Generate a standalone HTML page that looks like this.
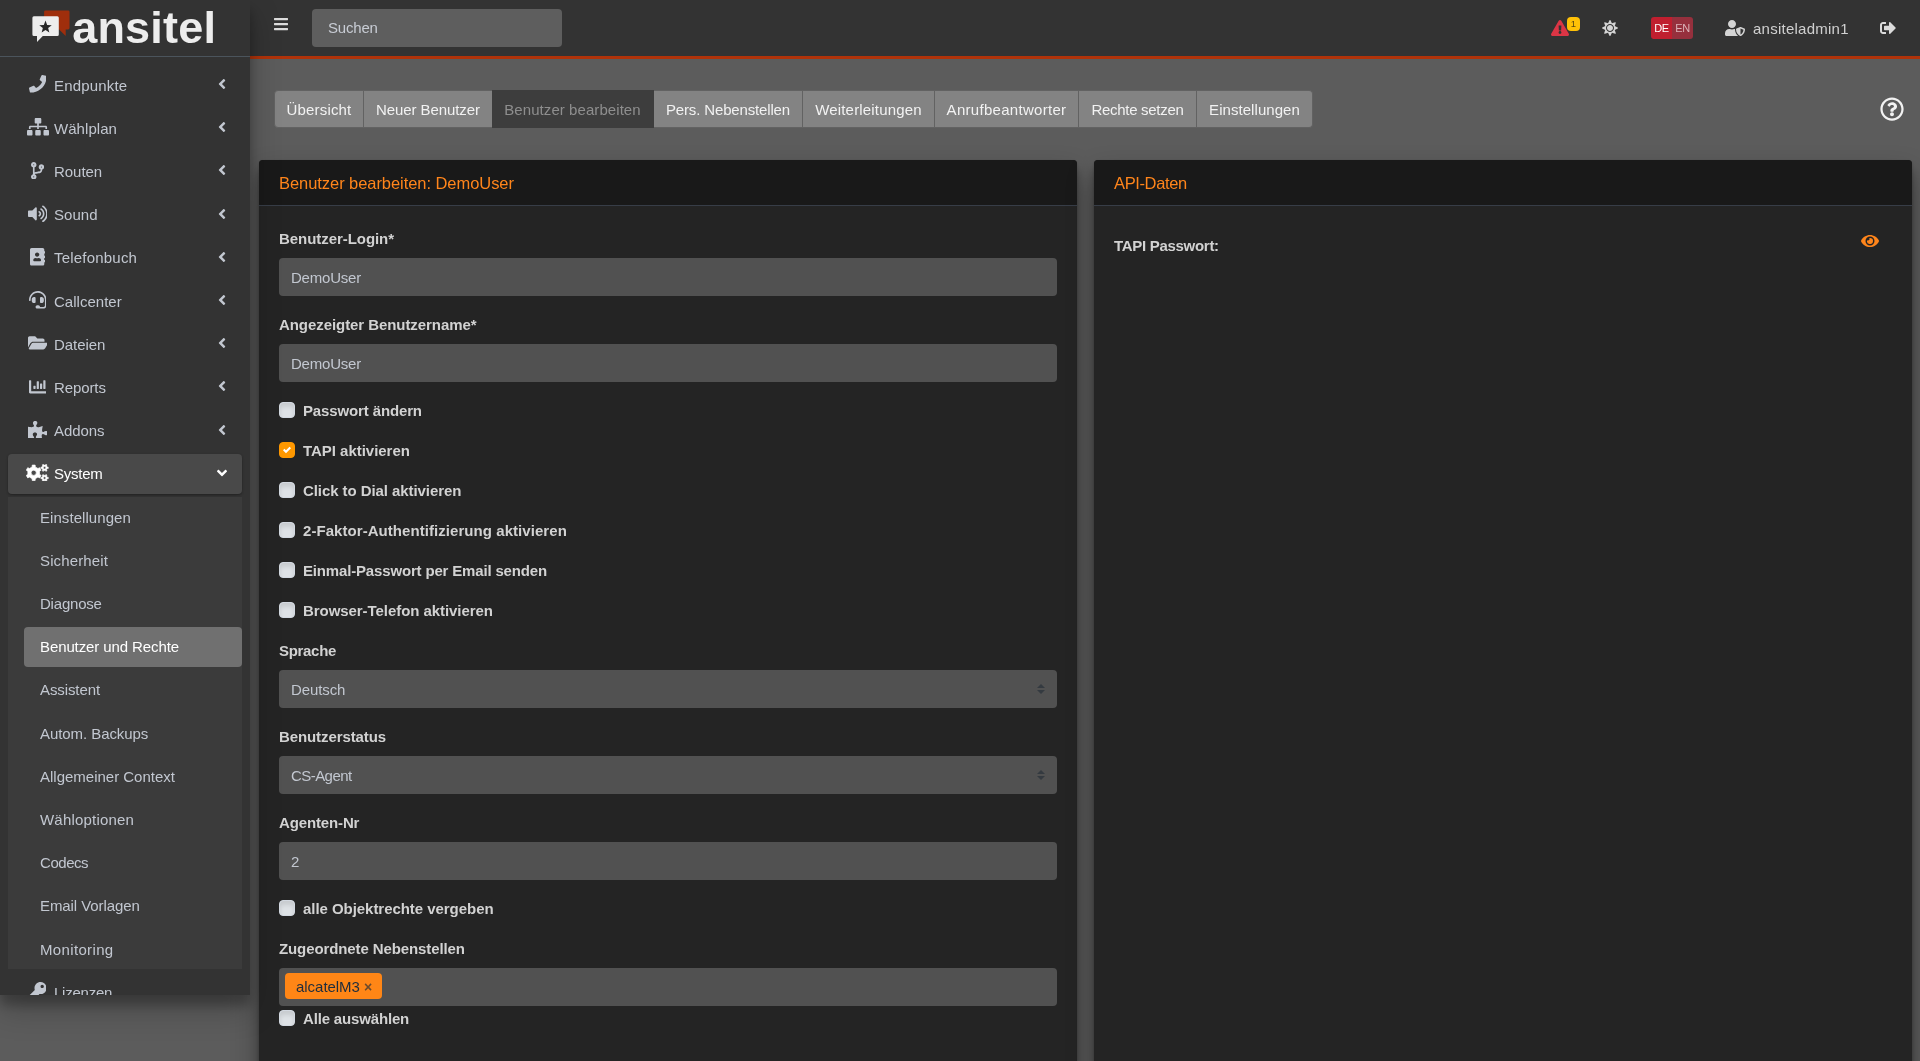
<!DOCTYPE html>
<html lang="de">
<head>
<meta charset="utf-8">
<title>ansitel - Benutzer bearbeiten</title>
<style>
*{box-sizing:border-box}
html,body{margin:0;padding:0}
body{width:1920px;height:1061px;overflow:hidden;position:relative;background:#5c5c5c;
  font-family:"Liberation Sans",sans-serif;font-size:15px;color:#d6d6d6}
ul{list-style:none;margin:0;padding:0}
svg{display:block}
#page{position:absolute;left:0;top:0;width:1920px;height:1061px;overflow:hidden;will-change:transform}

/* ---------- sidebar ---------- */
#sidebar{position:absolute;left:0;top:0;width:250px;height:995px;background:#333;overflow:hidden;z-index:30;
  box-shadow:0 14px 28px rgba(0,0,0,.25),0 10px 10px rgba(0,0,0,.22);color:#c2c7d0}
#brand{position:relative;height:57px;border-bottom:1px solid #4b545c}
#logo{position:absolute;left:31.600px;top:10px}
#brandtxt{position:absolute;left:72.200px;top:-1.200px;font-weight:bold;font-size:45px;line-height:57px;color:#ededed;letter-spacing:.200px;white-space:nowrap}
#nav{position:absolute;left:0;top:0;width:250px;height:995px}
.ni{position:absolute;left:8px;width:234px;height:40px;border-radius:4px;white-space:nowrap}
.nicon{position:absolute;left:16.800px;top:-1px;width:25.600px;height:40px;display:flex;align-items:center;justify-content:center}
.nt{position:absolute;left:46px;top:.5px;line-height:40px}
.narr{position:absolute;left:210px;top:11px;width:8px;height:16px}
.ni.open{background:#494949;color:#fff;box-shadow:0 1px 3px rgba(0,0,0,.12),0 1px 2px rgba(0,0,0,.24)}
.ni.open .narr{left:208.500px;top:11px}
.tree{position:absolute;left:8px;width:234px;height:472px;background:#3b3b3b}
.si{position:absolute;left:16px;width:218px;height:40px;border-radius:4px;white-space:nowrap}
.st{position:absolute;left:16px;top:.5px;line-height:40px}
.si.act{background:#707070;color:#fff}

/* ---------- topbar ---------- */
#topbar{position:absolute;left:250px;top:0;width:1670px;height:59px;background:#333;border-bottom:3px solid #b0330a;z-index:20;color:#d0d0d0}
#topbar>*{position:absolute}
#burger{left:24px;top:16px;color:#dcdcdc}
#search{left:62px;top:9px;width:250px;height:38px;border-radius:4px;background:#5e5e5e;padding:0 16px;line-height:38px;color:#c8ccd4;white-space:nowrap}
#warn{left:1301px;top:20px;color:#dc3545}
#badge{left:1317px;top:17px;width:13px;height:14px;border-radius:4px;background:#ffc107;color:#5c4a10;font-size:9.500px;line-height:14px;text-align:center}
#sun{left:1351.600px;top:20.400px;color:#d4d4d4}
#lang{left:1401px;top:17px;width:42px;height:22px;border-radius:3px;overflow:hidden;font-size:11px;line-height:23px;letter-spacing:-.3px}
#lang span{position:absolute;top:0;width:21px;height:22px;text-align:center}
#lang .de{left:0;background:#c01f2f;color:#fff}
#lang .en{left:21px;background:#96303d;color:#dcb4b9}
#ushield{left:1475px;top:20px;color:#d4d4d4}
.uname{left:1503px;top:0;line-height:57px;color:#d0d0d0;white-space:nowrap}
#signout{left:1629.600px;top:20px;color:#dcdcdc}

/* ---------- content ---------- */
#content{position:absolute;left:0;top:0;width:1920px;height:1061px;z-index:10}
#tabs{position:absolute;left:274px;top:90px;height:38px;width:1039px}
.tab{position:absolute;top:0;height:38px;background:#838383;border:1px solid #626262;border-left-width:0;color:#f2f2f2;text-align:center;line-height:36px;white-space:nowrap}
.tab.first{border-radius:4px 0 0 4px;border-left-width:1px}
.tab.last{border-radius:0 4px 4px 0}
.tab.act{background:#3d3d3d;border-color:#3d3d3d;color:#8e8e8e;z-index:2}
#help{position:absolute;left:1880.300px;top:97px;color:#f2f2f2}

.card{position:absolute;top:159.500px;width:818px;height:1000px;background:#242424;border-radius:4px;
  box-shadow:0 14px 28px rgba(0,0,0,.32),0 10px 10px rgba(0,0,0,.25),0 1px 3px rgba(0,0,0,.2)}
#card1{left:259px}
#card2{left:1094px}
.ch{height:46.120px;border-bottom:1px solid #373d47;background:#191919;border-radius:4px 4px 0 0;padding:12px 20px}
.ch h3{margin:0;font-weight:normal;font-size:16.500px;line-height:21.120px;color:#ff851b;white-space:nowrap}
.cbody{padding:20px;position:relative}
.fg{margin-bottom:16px}
.fg.last{margin-bottom:0}
label{display:block;font-weight:bold;line-height:24px;color:#d2d2d2;white-space:nowrap}
.fg label{margin-bottom:8px}
.inp{position:relative;height:38px;border-radius:4px;background:#515151;padding:0 12px;line-height:38px;color:#c2c7d0;white-space:nowrap}
.inp.sel svg{position:absolute;right:12px;top:14px;color:#343a40}
.ck{position:relative;height:24px;margin-bottom:16px;padding-left:24px}
.ck.tight{margin-bottom:0}
.cb{position:absolute;left:0;top:4px;width:16px;height:16px;border-radius:4px;background:#dee2e6;border:1px solid #d3d9e1;box-shadow:inset 0 4px 4px rgba(0,0,0,.1)}
.cb.on{background:#ff9800;border-color:#ff9800;box-shadow:none;color:#fff}
.cb.on svg{position:absolute;left:3px;top:3px}
.inp.s2{padding:0}
.chip{position:absolute;left:6px;top:5.500px;height:26px;width:97px;border-radius:4px;background:#ff8616;color:#1f2d3d;line-height:26px}
.chip .ct{position:absolute;left:11px;top:1px}
.chip .cx{position:absolute;left:79px;top:1px;color:#6b4a2c;font-weight:bold;font-size:14px}
#tapi{position:absolute;left:20px;top:26.900px}
#eye{position:absolute;left:766.500px;top:27.600px;color:#ff851b}

.tx{position:relative;top:1px}
#search .tx{top:0}

</style>
</head>
<body>
<div id="page">

<aside id="sidebar">
  <div id="brand">
    <svg id="logo" width="40" height="34" viewBox="0 0 40 34"><path fill="#9f2e0c" d="M13.5 0.4h22.6a1.4 1.4 0 0 1 1.4 1.4v16.3a1.4 1.4 0 0 1-1.400 1.400h-2.400v6.400l-6.600-6.400H13.500a1.400 1.400 0 0 1-1.400-1.400V1.800a1.400 1.400 0 0 1 1.400-1.400z"/><path fill="#ededed" d="M1.9 6.200h23.400a1.500 1.500 0 0 1 1.500 1.500v16.700a1.500 1.500 0 0 1-1.500 1.500H10.800l-5.800 6.200v-6.200H1.900a1.500 1.500 0 0 1-1.500-1.500V7.700a1.500 1.500 0 0 1 1.500-1.500z"/><path fill="#262626" d="M13.5 10.600l1.650 4.300 4.600.25-3.600 2.900 1.200 4.450-3.850-2.500-3.850 2.500 1.200-4.450-3.600-2.900 4.600-.25z"/></svg>
    <span id="brandtxt">ansitel</span>
  </div>
  <ul id="nav"><li class="ni " style="top:65.0px"><span class="nicon "><svg width="17.60" height="17.60" viewBox="0 0 512 512" style=""><path fill="currentColor" d="M493.4 24.600l-104-24c-11.300-2.600-22.900 3.300-27.500 13.900l-48 112c-4.200 9.800-1.400 21.300 6.900 28l60.600 49.600c-36 76.700-98.900 140.500-177.200 177.200l-49.600-60.600c-6.800-8.300-18.200-11.100-28-6.900l-112 48C3.900 366.500-2 378.100.6 389.400l24 104C27.100 504.200 36.700 512 48 512c256.100 0 464-207.500 464-464 0-11.200-7.700-20.900-18.600-23.400z"/></svg></span><span class="nt" style="font-size:15.0px;letter-spacing:0.172px;">Endpunkte</span><span class="narr"><svg width="8.00" height="16.00" viewBox="0 0 256 512" style=""><path fill="currentColor" d="M31.7 239l136-136c9.4-9.4 24.6-9.4 33.900 0l22.600 22.600c9.400 9.400 9.400 24.600 0 33.900L127.900 256l96.400 96.400c9.400 9.400 9.400 24.600 0 33.900L201.700 409c-9.400 9.400-24.600 9.400-33.900 0l-136-136c-9.500-9.400-9.500-24.600-.1-34z"/></svg></span></li><li class="ni " style="top:108.2px"><span class="nicon "><svg width="22.00" height="17.60" viewBox="0 0 640 512" style=""><path fill="currentColor" d="M128 352H32c-17.670 0-32 14.330-32 32v96c0 17.670 14.330 32 32 32h96c17.670 0 32-14.330 32-32v-96c0-17.670-14.330-32-32-32zm-24-80h192v48h48v-48h192v48h48v-57.590c0-21.170-17.230-38.410-38.410-38.410H344v-64h40c17.670 0 32-14.330 32-32V32c0-17.670-14.330-32-32-32H256c-17.670 0-32 14.330-32 32v96c0 17.670 14.330 32 32 32h40v64H94.410C73.230 224 56 241.230 56 262.410V320h48v-48zm264 80h-96c-17.670 0-32 14.330-32 32v96c0 17.670 14.330 32 32 32h96c17.670 0 32-14.330 32-32v-96c0-17.670-14.330-32-32-32zm240 0h-96c-17.670 0-32 14.330-32 32v96c0 17.670 14.330 32 32 32h96c17.670 0 32-14.330 32-32v-96c0-17.670-14.330-32-32-32z"/></svg></span><span class="nt" style="font-size:15.0px;letter-spacing:0.058px;">Wählplan</span><span class="narr"><svg width="8.00" height="16.00" viewBox="0 0 256 512" style=""><path fill="currentColor" d="M31.7 239l136-136c9.4-9.4 24.6-9.4 33.900 0l22.600 22.600c9.400 9.400 9.400 24.600 0 33.900L127.900 256l96.400 96.400c9.400 9.400 9.400 24.600 0 33.900L201.700 409c-9.400 9.400-24.600 9.400-33.900 0l-136-136c-9.500-9.400-9.500-24.600-.1-34z"/></svg></span></li><li class="ni " style="top:151.4px"><span class="nicon "><svg width="13.20" height="17.60" viewBox="0 0 384 512" style=""><path fill="currentColor" d="M384 144c0-44.200-35.800-80-80-80s-80 35.800-80 80c0 36.400 24.300 67.100 57.500 76.800-.6 16.100-4.200 28.500-11 36.900-15.400 19.200-49.300 22.400-85.200 25.700-28.200 2.600-57.400 5.400-81.300 16.900v-144c32.500-10.200 56-40.500 56-76.300 0-44.200-35.800-80-80-80S0 35.800 0 80c0 35.800 23.500 66.100 56 76.300v199.300C23.500 365.900 0 396.200 0 432c0 44.200 35.800 80 80 80s80-35.800 80-80c0-34-21.200-63.100-51.200-74.600 3.100-5.200 7.800-9.800 14.900-13.400 16.200-8.200 40.400-10.400 66.100-12.800 42.200-3.900 90-8.400 118.200-43.400 14-17.400 21.100-39.800 21.600-67.900 31.600-10.800 54.400-40.700 54.400-75.900zM80 64c8.800 0 16 7.200 16 16s-7.200 16-16 16-16-7.200-16-16 7.200-16 16-16zm0 384c-8.800 0-16-7.200-16-16s7.200-16 16-16 16 7.200 16 16-7.200 16-16 16zm224-320c8.800 0 16 7.200 16 16s-7.200 16-16 16-16-7.200-16-16 7.200-16 16-16z"/></svg></span><span class="nt" style="font-size:15.0px;letter-spacing:-0.034px;">Routen</span><span class="narr"><svg width="8.00" height="16.00" viewBox="0 0 256 512" style=""><path fill="currentColor" d="M31.7 239l136-136c9.4-9.4 24.6-9.4 33.900 0l22.600 22.600c9.400 9.400 9.400 24.600 0 33.900L127.900 256l96.400 96.400c9.400 9.400 9.400 24.600 0 33.900L201.700 409c-9.400 9.400-24.600 9.400-33.900 0l-136-136c-9.500-9.400-9.500-24.600-.1-34z"/></svg></span></li><li class="ni " style="top:194.6px"><span class="nicon "><svg width="19.80" height="17.60" viewBox="0 0 576 512" style=""><path fill="currentColor" d="M215.03 71.050L126.060 160H24c-13.260 0-24 10.740-24 24v144c0 13.250 10.740 24 24 24h102.060l88.970 88.950c15.030 15.030 40.970 4.470 40.970-16.970V88.020c0-21.460-25.960-31.980-40.970-16.970zm233.320-51.080c-11.170-7.330-26.180-4.240-33.510 6.950-7.340 11.170-4.220 26.180 6.950 33.510 66.270 43.490 105.820 116.600 105.820 195.580 0 78.980-39.550 152.090-105.820 195.580-11.170 7.320-14.290 22.340-6.950 33.500 7.040 10.710 21.930 14.560 33.510 6.950C528.270 439.580 576 351.330 576 256S528.270 72.430 448.350 19.970zM480 256c0-63.530-32.060-121.940-85.770-156.240-11.190-7.140-26.030-3.820-33.120 7.460s-3.780 26.210 7.410 33.360C408.270 165.970 432 209.110 432 256s-23.730 90.030-63.480 115.420c-11.190 7.140-14.500 22.070-7.410 33.360 6.510 10.360 21.120 15.140 33.120 7.460C447.940 377.940 480 319.540 480 256zm-141.770-76.870c-11.580-6.330-26.190-2.160-32.610 9.450-6.390 11.610-2.160 26.200 9.450 32.610C327.980 228.280 336 241.630 336 256c0 14.380-8.020 27.720-20.920 34.810-11.610 6.410-15.840 21-9.450 32.610 6.430 11.660 21.050 15.800 32.610 9.450 28.230-15.550 45.770-45 45.770-76.880s-17.540-61.320-45.780-76.860z"/></svg></span><span class="nt" style="font-size:15.0px;letter-spacing:0.047px;">Sound</span><span class="narr"><svg width="8.00" height="16.00" viewBox="0 0 256 512" style=""><path fill="currentColor" d="M31.7 239l136-136c9.4-9.4 24.6-9.4 33.900 0l22.600 22.600c9.400 9.400 9.400 24.600 0 33.900L127.900 256l96.400 96.400c9.400 9.400 9.400 24.600 0 33.900L201.700 409c-9.400 9.400-24.600 9.400-33.900 0l-136-136c-9.500-9.400-9.500-24.600-.1-34z"/></svg></span></li><li class="ni " style="top:237.8px"><span class="nicon "><svg width="15.40" height="17.60" viewBox="0 0 448 512" style=""><path fill="currentColor" d="M436 160c6.600 0 12-5.400 12-12v-40c0-6.600-5.400-12-12-12h-20V48c0-26.500-21.500-48-48-48H48C21.500 0 0 21.500 0 48v416c0 26.500 21.500 48 48 48h320c26.500 0 48-21.500 48-48v-48h20c6.600 0 12-5.400 12-12v-40c0-6.600-5.400-12-12-12h-20v-64h20c6.600 0 12-5.400 12-12v-40c0-6.600-5.400-12-12-12h-20v-64h20zm-228-32c35.300 0 64 28.700 64 64s-28.700 64-64 64-64-28.700-64-64 28.700-64 64-64zm112 236.800c0 10.600-10 19.200-22.400 19.200H118.400C106 384 96 375.400 96 364.800v-19.200c0-31.800 30.100-57.600 67.200-57.600h5c12.300 5.100 25.700 8 39.800 8s27.600-2.900 39.800-8h5c37.100 0 67.200 25.800 67.200 57.600v19.200z"/></svg></span><span class="nt" style="font-size:15.0px;letter-spacing:0.203px;">Telefonbuch</span><span class="narr"><svg width="8.00" height="16.00" viewBox="0 0 256 512" style=""><path fill="currentColor" d="M31.7 239l136-136c9.4-9.4 24.6-9.4 33.900 0l22.600 22.600c9.400 9.400 9.400 24.600 0 33.900L127.900 256l96.400 96.400c9.400 9.400 9.400 24.600 0 33.900L201.700 409c-9.400 9.400-24.600 9.400-33.900 0l-136-136c-9.500-9.400-9.500-24.600-.1-34z"/></svg></span></li><li class="ni " style="top:281.0px"><span class="nicon "><svg width="17.60" height="17.60" viewBox="0 0 512 512" style=""><path fill="currentColor" d="M192 208c0-17.670-14.330-32-32-32h-16c-35.350 0-64 28.650-64 64v48c0 35.350 28.650 64 64 64h16c17.670 0 32-14.330 32-32V208zm176 144c35.350 0 64-28.650 64-64v-48c0-35.350-28.650-64-64-64h-16c-17.670 0-32 14.330-32 32v112c0 17.670 14.330 32 32 32h16zM256 0C113.180 0 4.580 118.830 0 256v16c0 8.840 7.160 16 16 16h16c8.840 0 16-7.160 16-16v-16c0-114.690 93.310-208 208-208s208 93.310 208 208h-.12c.08 2.430.12 165.720.12 165.720 0 23.350-18.930 42.280-42.280 42.280H320c0-26.510-21.490-48-48-48h-32c-26.510 0-48 21.490-48 48s21.490 48 48 48h181.720c49.860 0 90.280-40.420 90.280-90.280V256C507.420 118.830 398.820 0 256 0z"/></svg></span><span class="nt" style="font-size:15.0px;letter-spacing:0.017px;">Callcenter</span><span class="narr"><svg width="8.00" height="16.00" viewBox="0 0 256 512" style=""><path fill="currentColor" d="M31.7 239l136-136c9.4-9.4 24.6-9.4 33.900 0l22.600 22.600c9.400 9.400 9.400 24.600 0 33.900L127.900 256l96.400 96.400c9.400 9.400 9.400 24.600 0 33.900L201.700 409c-9.400 9.400-24.600 9.400-33.900 0l-136-136c-9.500-9.400-9.500-24.600-.1-34z"/></svg></span></li><li class="ni " style="top:324.2px"><span class="nicon "><svg width="19.80" height="17.60" viewBox="0 0 576 512" style=""><path fill="currentColor" d="M572.694 292.093L500.270 416.248A63.997 63.997 0 0 1 444.989 448H45.025c-18.523 0-30.064-20.093-20.731-36.093l72.424-124.155A64 64 0 0 1 152 256h399.964c18.523 0 30.064 20.093 20.730 36.093zM152 224h328v-48c0-26.510-21.490-48-48-48H272l-64-64H48C21.490 64 0 85.490 0 112v278.046l69.077-118.418C86.214 242.250 117.989 224 152 224z"/></svg></span><span class="nt" style="font-size:15.0px;letter-spacing:-0.044px;">Dateien</span><span class="narr"><svg width="8.00" height="16.00" viewBox="0 0 256 512" style=""><path fill="currentColor" d="M31.7 239l136-136c9.4-9.4 24.6-9.4 33.900 0l22.600 22.600c9.400 9.400 9.400 24.600 0 33.900L127.900 256l96.400 96.400c9.400 9.400 9.400 24.600 0 33.900L201.700 409c-9.400 9.400-24.600 9.400-33.900 0l-136-136c-9.500-9.400-9.500-24.600-.1-34z"/></svg></span></li><li class="ni " style="top:367.4px"><span class="nicon "><svg width="17.60" height="17.60" viewBox="0 0 512 512" style=""><path fill="currentColor" d="M332.800 320h38.400c6.400 0 12.800-6.400 12.800-12.800V172.800c0-6.400-6.400-12.800-12.800-12.800h-38.400c-6.400 0-12.800 6.400-12.800 12.800v134.400c0 6.400 6.400 12.800 12.800 12.800zm96 0h38.400c6.400 0 12.800-6.400 12.800-12.800V76.800c0-6.400-6.400-12.800-12.800-12.800h-38.400c-6.400 0-12.800 6.400-12.800 12.800v230.400c0 6.400 6.400 12.800 12.800 12.800zm-288 0h38.400c6.400 0 12.800-6.400 12.800-12.800v-70.400c0-6.400-6.400-12.800-12.800-12.800h-38.400c-6.400 0-12.800 6.400-12.800 12.800v70.400c0 6.400 6.400 12.800 12.800 12.800zm96 0h38.400c6.400 0 12.800-6.400 12.800-12.800V108.800c0-6.400-6.400-12.800-12.800-12.800h-38.400c-6.400 0-12.800 6.400-12.800 12.800v198.400c0 6.400 6.400 12.800 12.800 12.800zM496 384H64V80c0-8.840-7.160-16-16-16H16C7.160 64 0 71.160 0 80v336c0 17.670 14.330 32 32 32h464c8.840 0 16-7.160 16-16v-32c0-8.840-7.160-16-16-16z"/></svg></span><span class="nt" style="font-size:15.0px;letter-spacing:-0.099px;">Reports</span><span class="narr"><svg width="8.00" height="16.00" viewBox="0 0 256 512" style=""><path fill="currentColor" d="M31.7 239l136-136c9.4-9.4 24.6-9.4 33.900 0l22.600 22.600c9.400 9.400 9.400 24.600 0 33.900L127.900 256l96.400 96.400c9.400 9.400 9.400 24.600 0 33.900L201.700 409c-9.400 9.400-24.600 9.400-33.900 0l-136-136c-9.500-9.400-9.500-24.600-.1-34z"/></svg></span></li><li class="ni " style="top:410.6px"><span class="nicon "><svg width="19.80" height="17.60" viewBox="0 0 576 512" style=""><path fill="currentColor" d="M519.442 288.651c-41.519 0-59.500 31.593-82.058 31.593C377.409 320.244 432 144 432 144s-196.288 80-196.288-3.297c0-35.827 36.288-46.250 36.288-85.985C272 19.216 243.885 0 210.539 0c-34.654 0-66.366 18.891-66.366 56.346 0 41.364 31.711 59.277 31.711 81.750C175.885 207.719 0 166.758 0 166.758v333.237s178.635 41.047 178.635-28.662c0-22.473-40-40.107-40-81.471 0-37.456 29.250-56.346 63.577-56.346 33.673 0 61.788 19.216 61.788 54.717 0 39.735-36.288 50.158-36.288 85.985 0 60.803 129.675 25.730 181.230 25.730 0 0-34.725-120.101 25.827-120.101 35.962 0 46.423 36.152 86.308 36.152C556.712 416 576 387.990 576 354.443c0-34.199-18.962-65.792-56.558-65.792z"/></svg></span><span class="nt" style="font-size:15.0px;letter-spacing:-0.059px;">Addons</span><span class="narr"><svg width="8.00" height="16.00" viewBox="0 0 256 512" style=""><path fill="currentColor" d="M31.7 239l136-136c9.4-9.4 24.6-9.4 33.900 0l22.600 22.600c9.400 9.400 9.400 24.600 0 33.900L127.900 256l96.400 96.400c9.400 9.400 9.400 24.600 0 33.900L201.700 409c-9.400 9.400-24.600 9.400-33.900 0l-136-136c-9.500-9.400-9.500-24.600-.1-34z"/></svg></span></li><li class="ni open" style="top:453.8px"><span class="nicon "><svg width="22.7" height="17.6" viewBox="0 0 22.7 17.6" style="margin-top:-.5px"><path fill="currentColor" stroke="currentColor" stroke-width=".7" stroke-linejoin="round" fill-rule="evenodd" d="M9.27 2.96 L9.17 1.09 L6.23 1.09 L6.13 2.96 L3.42 4.52 L1.76 3.67 L0.29 6.22 L1.86 7.23 L1.86 10.37 L0.29 11.38 L1.76 13.93 L3.42 13.08 L6.13 14.64 L6.23 16.51 L9.17 16.51 L9.27 14.64 L11.98 13.08 L13.64 13.93 L15.11 11.38 L13.54 10.37 L13.54 7.23 L15.11 6.22 L13.64 3.67 L11.98 4.52Z M5.10 8.80a2.60 2.60 0 1 0 5.20 0a2.60 2.60 0 1 0 -5.20 0Z"/><path fill="currentColor" stroke="currentColor" stroke-width=".5" stroke-linejoin="round" fill-rule="evenodd" d="M21.30 4.52 L22.34 4.47 L22.34 3.13 L21.30 3.08 L20.58 1.82 L21.05 0.90 L19.89 0.22 L19.32 1.10 L17.88 1.10 L17.31 0.22 L16.15 0.90 L16.62 1.82 L15.90 3.08 L14.86 3.13 L14.86 4.47 L15.90 4.52 L16.62 5.78 L16.15 6.70 L17.31 7.38 L17.88 6.50 L19.32 6.50 L19.89 7.38 L21.05 6.70 L20.58 5.78Z M17.40 3.80a1.20 1.20 0 1 0 2.40 0a1.20 1.20 0 1 0 -2.40 0Z M21.30 14.72 L22.34 14.67 L22.34 13.33 L21.30 13.28 L20.58 12.02 L21.05 11.10 L19.89 10.42 L19.32 11.30 L17.88 11.30 L17.31 10.42 L16.15 11.10 L16.62 12.02 L15.90 13.28 L14.86 13.33 L14.86 14.67 L15.90 14.72 L16.62 15.98 L16.15 16.90 L17.31 17.58 L17.88 16.70 L19.32 16.70 L19.89 17.58 L21.05 16.90 L20.58 15.98Z M17.40 14.00a1.20 1.20 0 1 0 2.40 0a1.20 1.20 0 1 0 -2.40 0Z"/></svg></span><span class="nt" style="font-size:15.0px;letter-spacing:-0.244px;">System</span><span class="narr"><svg width="10.00" height="16.00" viewBox="0 0 320 512" style=""><path fill="currentColor" d="M143 352.300L7 216.300c-9.400-9.400-9.400-24.600 0-33.900l22.600-22.600c9.400-9.400 24.600-9.400 33.900 0l96.400 96.400 96.400-96.400c9.400-9.400 24.600-9.400 33.900 0l22.600 22.600c9.400 9.400 9.400 24.600 0 33.900l-136 136c-9.200 9.400-24.400 9.400-33.800 0z"/></svg></span></li><li class="tree" style="top:497px"><ul><li class="si " style="top:0.0px"><span class="st" style="font-size:15.0px;letter-spacing:0.059px;">Einstellungen</span></li><li class="si " style="top:43.2px"><span class="st" style="font-size:15.0px;letter-spacing:0.139px;">Sicherheit</span></li><li class="si " style="top:86.4px"><span class="st" style="font-size:15.0px;letter-spacing:-0.208px;">Diagnose</span></li><li class="si act" style="top:129.6px"><span class="st" style="font-size:15.0px;letter-spacing:-0.103px;">Benutzer und Rechte</span></li><li class="si " style="top:172.8px"><span class="st" style="font-size:15.0px;letter-spacing:-0.098px;">Assistent</span></li><li class="si " style="top:216.0px"><span class="st" style="font-size:15.0px;letter-spacing:-0.069px;">Autom. Backups</span></li><li class="si " style="top:259.2px"><span class="st" style="font-size:15.0px;letter-spacing:-0.007px;">Allgemeiner Context</span></li><li class="si " style="top:302.4px"><span class="st" style="font-size:15.0px;letter-spacing:0.197px;">Wähloptionen</span></li><li class="si " style="top:345.6px"><span class="st" style="font-size:15.0px;letter-spacing:-0.447px;">Codecs</span></li><li class="si " style="top:388.8px"><span class="st" style="font-size:15.0px;letter-spacing:-0.078px;">Email Vorlagen</span></li><li class="si " style="top:432.0px"><span class="st" style="font-size:15.0px;letter-spacing:0.347px;">Monitoring</span></li></ul></li><li class="ni " style="top:972.2px"><span class="nicon keyic"><svg width="17.60" height="17.60" viewBox="0 0 512 512" style=""><path fill="currentColor" d="M512 176.001C512 273.203 433.202 352 336 352c-11.220 0-22.190-1.062-32.827-3.069l-24.012 27.014A23.999 23.999 0 0 1 261.223 384H224v40c0 13.255-10.745 24-24 24h-40v40c0 13.255-10.745 24-24 24H24c-13.255 0-24-10.745-24-24v-78.059c0-6.365 2.529-12.470 7.029-16.971l161.802-161.802C163.108 213.814 160 195.271 160 176 160 78.798 238.797.001 335.999 0 433.488-.001 512 78.511 512 176.001zM336 128c0 26.510 21.490 48 48 48s48-21.490 48-48-21.490-48-48-48-48 21.490-48 48z"/></svg></span><span class="nt" style="font-size:15.0px;letter-spacing:-0.239px;">Lizenzen</span></li></ul>
</aside>

<header id="topbar">
  <span id="burger"><svg width="14.00" height="16.00" viewBox="0 0 448 512" style=""><path fill="currentColor" d="M16 132h416c8.837 0 16-7.163 16-16V76c0-8.837-7.163-16-16-16H16C7.163 60 0 67.163 0 76v40c0 8.837 7.163 16 16 16zm0 160h416c8.837 0 16-7.163 16-16v-40c0-8.837-7.163-16-16-16H16c-8.837 0-16 7.163-16 16v40c0 8.837 7.163 16 16 16zm0 160h416c8.837 0 16-7.163 16-16v-40c0-8.837-7.163-16-16-16H16c-8.837 0-16 7.163-16 16v40c0 8.837 7.163 16 16 16z"/></svg></span>
  <div id="search"><span class="tx" style="font-size:15.0px;letter-spacing:-0.188px;">Suchen</span></div>
  <span id="warn"><svg width="18.00" height="16.00" viewBox="0 0 576 512" style=""><path fill="currentColor" d="M569.517 440.013C587.975 472.007 564.806 512 527.940 512H48.054c-36.937 0-59.999-40.055-41.577-71.987L246.423 23.985c18.467-32.009 64.720-31.951 83.154 0l239.940 416.028zM288 354c-25.405 0-46 20.595-46 46s20.595 46 46 46 46-20.595 46-46-20.595-46-46-46zm-43.673-165.346l7.418 136c.347 6.364 5.609 11.346 11.982 11.346h48.546c6.373 0 11.635-4.982 11.982-11.346l7.418-136c.375-6.874-5.098-12.654-11.982-12.654h-63.383c-6.884 0-12.356 5.780-11.981 12.654z"/></svg></span><span id="badge">1</span>
  <span id="sun"><svg width="16.00" height="16.00" viewBox="0 0 512 512" style=""><path fill="currentColor" d="M256 160c-52.900 0-96 43.100-96 96s43.100 96 96 96 96-43.100 96-96-43.100-96-96-96zm246.400 80.500l-94.700-47.300 33.500-100.400c4.500-13.600-8.400-26.500-21.900-21.900l-100.400 33.500-47.400-94.800c-6.400-12.800-24.600-12.800-31 0l-47.300 94.700L92.700 70.800c-13.600-4.500-26.500 8.400-21.900 21.900l33.500 100.400-94.700 47.400c-12.800 6.400-12.800 24.600 0 31l94.700 47.300-33.500 100.500c-4.500 13.600 8.400 26.500 21.900 21.900l100.400-33.500 47.300 94.700c6.400 12.800 24.600 12.800 31 0l47.300-94.700 100.400 33.500c13.600 4.500 26.500-8.400 21.900-21.900l-33.500-100.400 94.700-47.300c13-6.500 13-24.700.2-31.100zm-155.900 106c-49.900 49.900-131.100 49.900-181 0-49.900-49.900-49.900-131.100 0-181 49.900-49.900 131.100-49.900 181 0 49.900 49.900 49.900 131.100 0 181z"/></svg></span>
  <div id="lang"><span class="de">DE</span><span class="en">EN</span></div>
  <span id="ushield"><svg width="20.00" height="16.00" viewBox="0 0 640 512" style=""><path fill="currentColor" d="M622.3 271.100l-115.200-45c-4.100-1.600-12.600-3.700-22.200 0l-115.200 45c-10.700 4.200-17.700 14-17.700 24.900 0 111.600 68.700 188.800 132.900 213.900 9.600 3.700 18 1.600 22.200 0C558.400 489.900 640 420.500 640 296c0-10.900-7-20.700-17.700-24.900zM496 462.400V273.300l95.500 37.300c-5.600 87.100-60.900 135.400-95.500 151.800zM224 256c70.700 0 128-57.300 128-128S294.700 0 224 0 96 57.300 96 128s57.300 128 128 128zm96 40c0-2.500.8-4.800 1.100-7.200-2.500-.1-4.900-.8-7.500-.8h-16.700c-22.200 10.200-46.900 16-72.900 16s-50.600-5.800-72.900-16h-16.700C60.200 288 0 348.200 0 422.400V464c0 26.500 21.500 48 48 48h352c6.800 0 13.300-1.500 19.200-4-54-42.900-99.200-116.700-99.200-212z"/></svg></span>
  <span class="uname" style="font-size:15.0px;letter-spacing:0.246px;">ansiteladmin1</span>
  <span id="signout"><svg width="16.00" height="16.00" viewBox="0 0 512 512" style=""><path fill="currentColor" d="M497 273L329 441c-15 15-41 4.500-41-17v-96H152c-13.300 0-24-10.700-24-24v-96c0-13.300 10.700-24 24-24h136V88c0-21.400 25.900-32 41-17l168 168c9.300 9.400 9.300 24.600 0 34zM192 436v-40c0-6.600-5.400-12-12-12H96c-17.700 0-32-14.300-32-32V160c0-17.700 14.300-32 32-32h84c6.600 0 12-5.400 12-12V76c0-6.600-5.400-12-12-12H96c-53 0-96 43-96 96v192c0 53 43 96 96 96h84c6.600 0 12-5.400 12-12z"/></svg></span>
</header>
<main id="content">
<div id="tabs"><span class="tab first" style="left:0px;width:90px"><span class="tt tx" style="font-size:15.0px;letter-spacing:0.162px;">Übersicht</span></span><span class="tab " style="left:90px;width:129px"><span class="tt tx" style="font-size:15.0px;letter-spacing:-0.079px;">Neuer Benutzer</span></span><span class="tab act" style="left:218px;width:162px"><span class="tt tx" style="font-size:15.0px;letter-spacing:0.068px;">Benutzer bearbeiten</span></span><span class="tab " style="left:380px;width:149px"><span class="tt tx" style="font-size:15.0px;letter-spacing:-0.151px;">Pers. Nebenstellen</span></span><span class="tab " style="left:529px;width:132px"><span class="tt tx" style="font-size:15.0px;letter-spacing:0.181px;">Weiterleitungen</span></span><span class="tab " style="left:661px;width:144px"><span class="tt tx" style="font-size:15.0px;letter-spacing:0.296px;">Anrufbeantworter</span></span><span class="tab " style="left:805px;width:118px"><span class="tt tx" style="font-size:15.0px;letter-spacing:-0.289px;">Rechte setzen</span></span><span class="tab last" style="left:923px;width:116px"><span class="tt tx" style="font-size:15.0px;letter-spacing:0.059px;">Einstellungen</span></span></div><span id="help"><svg width="24.00" height="24.00" viewBox="0 0 512 512" style=""><path fill="currentColor" d="M256 8C119.043 8 8 119.083 8 256c0 136.997 111.043 248 248 248s248-111.003 248-248C504 119.083 392.957 8 256 8zm0 448c-110.532 0-200-89.431-200-200 0-110.495 89.472-200 200-200 110.491 0 200 89.471 200 200 0 110.530-89.431 200-200 200zm107.244-255.200c0 67.052-72.421 68.084-72.421 92.863V300c0 6.627-5.373 12-12 12h-45.647c-6.627 0-12-5.373-12-12v-8.659c0-35.745 27.100-50.034 47.579-61.516 17.561-9.845 28.324-16.541 28.324-29.579 0-17.246-21.999-28.693-39.784-28.693-23.189 0-33.894 10.977-48.942 29.969-4.057 5.120-11.460 6.071-16.666 2.124l-27.824-21.098c-5.107-3.872-6.251-11.066-2.644-16.363C184.846 131.491 214.940 112 261.794 112c49.071 0 101.450 38.304 101.450 88.800zM298 368c0 23.159-18.841 42-42 42s-42-18.841-42-42 18.841-42 42-42 42 18.841 42 42z"/></svg></span>

<section class="card" id="card1">
  <div class="ch"><h3><span class="tx" style="font-size:16.5px;letter-spacing:-0.060px;">Benutzer bearbeiten: DemoUser</span></h3></div>
  <div class="cbody"><div class="fg "><label><span class="tx" style="font-size:15.0px;letter-spacing:-0.056px;font-weight:bold;">Benutzer-Login*</span></label><div class="inp"><span class="tx" style="font-size:15.0px;letter-spacing:-0.217px;">DemoUser</span></div></div><div class="fg "><label><span class="tx" style="font-size:15.0px;letter-spacing:-0.068px;font-weight:bold;">Angezeigter Benutzername*</span></label><div class="inp"><span class="tx" style="font-size:15.0px;letter-spacing:-0.217px;">DemoUser</span></div></div><div class="ck "><span class="cb"></span><label><span class="tx" style="font-size:15.0px;letter-spacing:-0.132px;font-weight:bold;">Passwort ändern</span></label></div><div class="ck "><span class="cb on"><svg width="8" height="8" viewBox="0 0 8 8"><path fill="currentColor" d="M6.564.75l-3.59 3.612-1.538-1.550L0 4.260l2.974 2.990L8 2.193z"/></svg></span><label><span class="tx" style="font-size:15.0px;letter-spacing:-0.027px;font-weight:bold;">TAPI aktivieren</span></label></div><div class="ck "><span class="cb"></span><label><span class="tx" style="font-size:15.0px;letter-spacing:-0.074px;font-weight:bold;">Click to Dial aktivieren</span></label></div><div class="ck "><span class="cb"></span><label><span class="tx" style="font-size:15.0px;letter-spacing:0.058px;font-weight:bold;">2-Faktor-Authentifizierung aktivieren</span></label></div><div class="ck "><span class="cb"></span><label><span class="tx" style="font-size:15.0px;letter-spacing:-0.166px;font-weight:bold;">Einmal-Passwort per Email senden</span></label></div><div class="ck "><span class="cb"></span><label><span class="tx" style="font-size:15.0px;letter-spacing:-0.060px;font-weight:bold;">Browser-Telefon aktivieren</span></label></div><div class="fg "><label><span class="tx" style="font-size:15.0px;letter-spacing:-0.312px;font-weight:bold;">Sprache</span></label><div class="inp sel"><span class="tx" style="font-size:15.0px;letter-spacing:-0.099px;">Deutsch</span><svg width="8.00" height="10.00" viewBox="0 0 4 5" style=""><path fill="currentColor" d="M2 0L0 2h4zm0 5L0 3h4z"/></svg></div></div><div class="fg "><label><span class="tx" style="font-size:15.0px;letter-spacing:-0.099px;font-weight:bold;">Benutzerstatus</span></label><div class="inp sel"><span class="tx" style="font-size:15.0px;letter-spacing:-0.558px;">CS-Agent</span><svg width="8.00" height="10.00" viewBox="0 0 4 5" style=""><path fill="currentColor" d="M2 0L0 2h4zm0 5L0 3h4z"/></svg></div></div><div class="fg "><label><span class="tx" style="font-size:15.0px;letter-spacing:-0.134px;font-weight:bold;">Agenten-Nr</span></label><div class="inp"><span class="tx" style="font-size:15.0px;letter-spacing:0.000px;">2</span></div></div><div class="ck "><span class="cb"></span><label><span class="tx" style="font-size:15.0px;letter-spacing:-0.046px;font-weight:bold;">alle Objektrechte vergeben</span></label></div><div class="fg last"><label><span class="tx" style="font-size:15.0px;letter-spacing:-0.105px;font-weight:bold;">Zugeordnete Nebenstellen</span></label><div class="inp s2"><span class="chip"><span class="ct" style="font-size:15.0px;letter-spacing:-0.035px;">alcatelM3</span><span class="cx">×</span></span></div></div><div class="ck tight"><span class="cb"></span><label><span class="tx" style="font-size:15.0px;letter-spacing:-0.162px;font-weight:bold;">Alle auswählen</span></label></div></div>
</section>

<section class="card" id="card2">
  <div class="ch"><h3><span class="tx" style="font-size:16.5px;letter-spacing:-0.375px;">API-Daten</span></h3></div>
  <div class="cbody"><label id="tapi"><span class="tx" style="font-size:15.0px;letter-spacing:-0.293px;font-weight:bold;">TAPI Passwort:</span></label><span id="eye"><svg width="18.00" height="16.00" viewBox="0 0 576 512" style=""><path fill="currentColor" d="M572.52 241.4C518.29 135.59 410.93 64 288 64S57.68 135.64 3.48 241.41a32.35 32.35 0 0 0 0 29.190C57.710 376.410 165.070 448 288 448s230.320-71.640 284.520-177.410a32.350 32.350 0 0 0 0-29.190zM288 400a144 144 0 1 1 144-144 143.930 143.930 0 0 1-144 144zm0-240a95.310 95.310 0 0 0-25.310 3.790 47.850 47.850 0 0 1-66.900 66.900A95.780 95.780 0 1 0 288 160z"/></svg></span></div>
</section>
</main>
</div>
</body>
</html>
